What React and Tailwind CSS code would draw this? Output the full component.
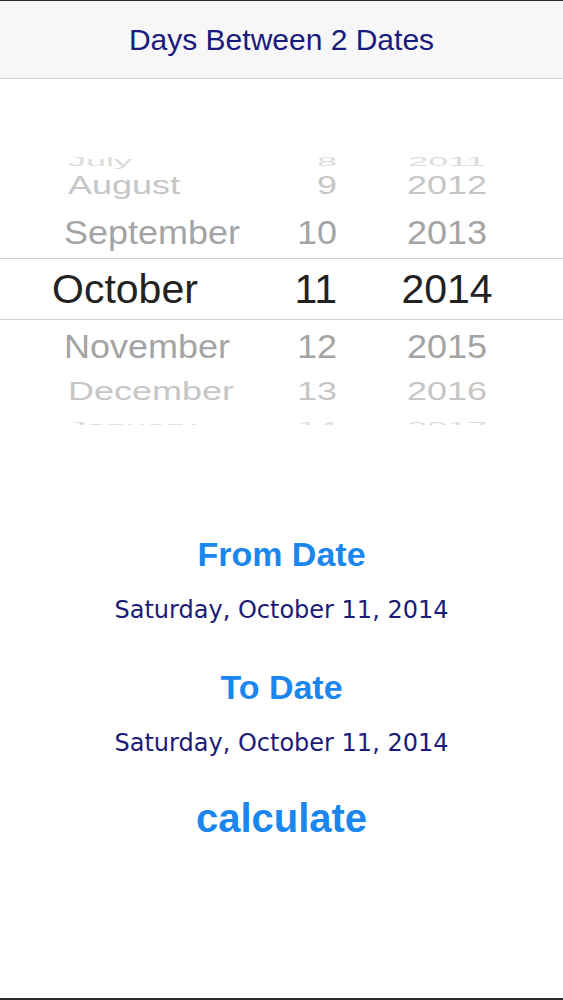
import React from "react";

const rows = [
  { m: "July", d: "8", y: "2011", h: "h-[18px]", size: "text-[36px]", sc: "scale-y-[0.35]", color: "text-[#dcdcdc]", pl: "pl-[68px]" },
  { m: "August", d: "9", y: "2012", h: "h-[46px]", size: "text-[36px]", sc: "scale-y-[0.72]", color: "text-[#c6c6c6]", pl: "pl-[68px]" },
  { m: "September", d: "10", y: "2013", h: "h-[50px]", size: "text-[36px]", sc: "scale-y-[0.9]", color: "text-[#a4a4a4]", pl: "pl-[64px]" },
  { m: "October", d: "11", y: "2014", h: "h-[62px]", size: "text-[41px]", sc: "scale-y-100", color: "text-[#222222]", pl: "pl-[52px]", sel: true },
  { m: "November", d: "12", y: "2015", h: "h-[53px]", size: "text-[36px]", sc: "scale-y-[0.9]", color: "text-[#a4a4a4]", pl: "pl-[64px]" },
  { m: "December", d: "13", y: "2016", h: "h-[36px]", size: "text-[36px]", sc: "scale-y-[0.72]", color: "text-[#c6c6c6]", pl: "pl-[68px]" },
  { m: "January", d: "14", y: "2017", h: "h-[18px]", size: "text-[36px]", sc: "scale-y-[0.35]", color: "text-[#dcdcdc]", pl: "pl-[68px]" },
];

function Row({ r }) {
  return (
    <div
      className={`grid grid-cols-[260px_77px_220px] items-center ${r.h} ${r.size} ${r.color} leading-none ${
        r.sel ? "border-y border-[#cfcfcf]" : ""
      }`}
    >
      <div className={`${r.pl} whitespace-nowrap`}>
        <span className={`inline-block ${r.sc}`}>{r.m}</span>
      </div>
      <div className="text-right whitespace-nowrap">
        <span className={`inline-block ${r.sc}`}>{r.d}</span>
      </div>
      <div className="text-center whitespace-nowrap">
        <span className={`inline-block ${r.sc}`}>{r.y}</span>
      </div>
    </div>
  );
}

export default function App() {
  return (
    <div
      className="w-[563px] h-[1000px] bg-white flex flex-col border-t border-[#2a2a2a] border-b-2 border-b-[#2a2a2a] overflow-hidden"
      style={{ fontFamily: '"Liberation Sans", Arial, sans-serif' }}
    >
      <div className="h-[78px] shrink-0 bg-[#f7f7f8] border-b border-[#d6d6d8] flex items-center justify-center">
        <span className="text-[30px] text-[#1a1a7e] leading-none">Days Between 2 Dates</span>
      </div>
      <div className="mt-[74px] h-[272px] shrink-0 overflow-hidden">
        <div className="-mt-[9px]">
          {rows.map((r) => (
            <Row key={r.m} r={r} />
          ))}
        </div>
      </div>
      <div className="flex flex-col items-center">
        <div className="mt-[111px] h-[36px] flex items-center text-[34px] font-bold text-[#1a86ee] leading-none">
          From Date
        </div>
        <div
          className="mt-[23px] h-[30px] flex items-center text-[24px] text-[#1b1b78] leading-none"
          style={{ fontFamily: '"DejaVu Sans", sans-serif' }}
        >
          Saturday, October 11, 2014
        </div>
        <div className="mt-[44px] h-[36px] flex items-center text-[34px] font-bold text-[#1a86ee] leading-none">
          To Date
        </div>
        <div
          className="mt-[23px] h-[30px] flex items-center text-[24px] text-[#1b1b78] leading-none"
          style={{ fontFamily: '"DejaVu Sans", sans-serif' }}
        >
          Saturday, October 11, 2014
        </div>
        <div className="mt-[38px] h-[44px] flex items-center text-[40px] font-bold text-[#1a86ee] leading-none">
          calculate
        </div>
      </div>
    </div>
  );
}
